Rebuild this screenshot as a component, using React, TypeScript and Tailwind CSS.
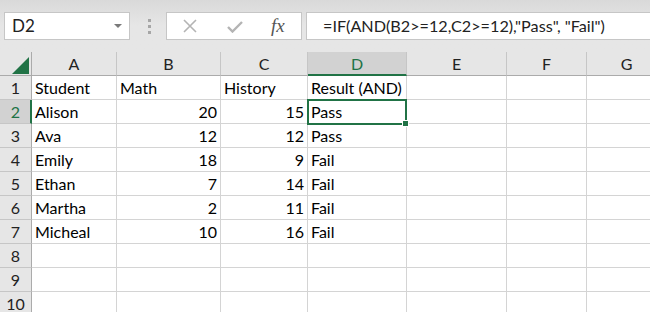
import React from "react";

// column letters and widths (px, right border included)
const COLUMNS: { key: string; width: number }[] = [
  { key: "A", width: 85 },
  { key: "B", width: 104 },
  { key: "C", width: 87 },
  { key: "D", width: 99 },
  { key: "E", width: 100 },
  { key: "F", width: 80 },
  { key: "G", width: 80 },
];

type Cell = { text: string; align?: "left" | "right" };

const ROWS: Cell[][] = [
  [{ text: "Student" }, { text: "Math" }, { text: "History" }, { text: "Result (AND)" }],
  [{ text: "Alison" }, { text: "20", align: "right" }, { text: "15", align: "right" }, { text: "Pass" }],
  [{ text: "Ava" }, { text: "12", align: "right" }, { text: "12", align: "right" }, { text: "Pass" }],
  [{ text: "Emily" }, { text: "18", align: "right" }, { text: "9", align: "right" }, { text: "Fail" }],
  [{ text: "Ethan" }, { text: "7", align: "right" }, { text: "14", align: "right" }, { text: "Fail" }],
  [{ text: "Martha" }, { text: "2", align: "right" }, { text: "11", align: "right" }, { text: "Fail" }],
  [{ text: "Micheal" }, { text: "10", align: "right" }, { text: "16", align: "right" }, { text: "Fail" }],
  [],
  [],
  [],
];

function FormulaBar() {
  return (
    <div className="flex h-[52px] items-start bg-gradient-to-b from-[#d9d9d9] via-[#e6e6e6] to-[#e6e6e6] pt-3">
      {/* name box */}
      <div className="ml-1 flex h-7 w-[126px] items-center justify-between border border-[#c6c6c6] bg-white pl-[7px] pr-[7px]">
        <span className="text-[17px] text-[#222]">D2</span>
        <span className="h-0 w-0 border-x-[4px] border-t-[4px] border-x-transparent border-t-[#7a7a7a]" />
      </div>

      {/* grip */}
      <div className="ml-[18px] mt-[7px] flex flex-col gap-[3px]">
        <span className="h-[3px] w-[3px] bg-[#a6a6a6]" />
        <span className="h-[3px] w-[3px] bg-[#a6a6a6]" />
        <span className="h-[3px] w-[3px] bg-[#a6a6a6]" />
      </div>

      {/* cancel / enter / fx */}
      <div className="ml-[15px] flex h-7 w-[136px] items-center border border-[#c6c6c6] bg-white">
        <svg width="14" height="14" viewBox="0 0 14 14" className="ml-[16px]">
          <path d="M1 1 L13 13 M13 1 L1 13" stroke="#b4b4b4" strokeWidth="1.6" fill="none" />
        </svg>
        <svg width="16" height="13" viewBox="0 0 16 13" className="ml-[30px]">
          <path d="M1 7 L5.5 11.5 L15 2" stroke="#b4b4b4" strokeWidth="2.4" fill="none" />
        </svg>
        <span className="ml-[28px] font-['Liberation_Serif',serif] text-[19px] italic text-[#555]">fx</span>
      </div>

      {/* formula input */}
      <div className="ml-1 flex h-7 flex-1 items-center border border-r-0 border-[#c6c6c6] bg-white pl-[16px]">
        <span className="whitespace-nowrap text-[16.2px] text-[#222]">
          =IF(AND(B2&gt;=12,C2&gt;=12),"Pass", "Fail")
        </span>
      </div>
    </div>
  );
}

function Sheet() {
  return (
    <div className="relative">
      {/* column headers */}
      <div className="flex h-6">
        <div className="relative h-6 w-8 shrink-0 border-b border-r border-[#ababab] bg-[#e6e6e6]">
          <svg width="17" height="17" viewBox="0 0 17 17" className="absolute left-[12px] top-[5px]">
            <path d="M17 0 L17 17 L0 17 Z" fill="#217346" />
          </svg>
        </div>
        {COLUMNS.map((col) => {
          const selected = col.key === "D";
          return (
            <div
              key={col.key}
              style={{ width: col.width }}
              className={
                selected
                  ? "flex h-6 shrink-0 items-center justify-center border-b-2 border-r border-b-[#217346] border-r-[#c6c6c6] bg-[#d2d2d2] pt-[1px] text-[16px] text-[#217346]"
                  : "flex h-6 shrink-0 items-center justify-center border-b border-r border-b-[#ababab] border-r-[#c6c6c6] bg-[#e6e6e6] text-[16px] text-[#222]"
              }
            >
              {col.key}
            </div>
          );
        })}
      </div>

      {/* rows */}
      {ROWS.map((row, r) => {
        const selected = r === 1;
        return (
          <div key={r} className="flex h-6">
            <div
              className={
                selected
                  ? "flex h-6 w-8 shrink-0 items-center justify-center border-b border-r-2 border-b-[#c6c6c6] border-r-[#217346] bg-[#d2d2d2] pl-[1px] text-[16px] text-[#217346]"
                  : "flex h-6 w-8 shrink-0 items-center justify-center border-b border-r border-b-[#c6c6c6] border-r-[#ababab] bg-[#e6e6e6] text-[16px] text-[#222]"
              }
            >
              {r + 1}
            </div>
            {COLUMNS.map((col, c) => {
              const cell = row[c];
              return (
                <div
                  key={col.key}
                  style={{ width: col.width }}
                  className={
                    cell?.align === "right"
                      ? "flex h-6 shrink-0 items-center justify-end border-b border-r border-[#d4d4d4] bg-white pr-[3px] text-[16px] text-black"
                      : "flex h-6 shrink-0 items-center border-b border-r border-[#d4d4d4] bg-white pl-[3px] text-[16px] text-black"
                  }
                >
                  {cell?.text ?? ""}
                </div>
              );
            })}
          </div>
        );
      })}

      {/* active cell outline + fill handle */}
      <div className="pointer-events-none absolute left-[307px] top-[47px] h-[26px] w-[100px] border-2 border-[#217346]">
        <span className="absolute -bottom-[4px] -right-[4px] h-[7px] w-[7px] border border-white bg-[#217346]" />
      </div>
    </div>
  );
}

export default function App() {
  return (
    <div className="h-[312px] w-[650px] overflow-hidden bg-[#e6e6e6] font-['Lato','Liberation_Sans',sans-serif]">
      <FormulaBar />
      <Sheet />
    </div>
  );
}
